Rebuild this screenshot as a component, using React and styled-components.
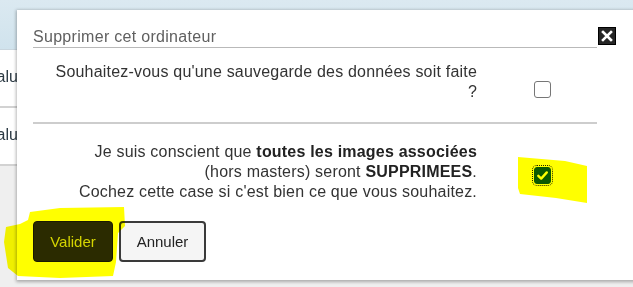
import React from "react";
import styled, { createGlobalStyle } from "styled-components";

const GlobalStyle = createGlobalStyle`
  html, body {
    margin: 0;
    padding: 0;
    overflow: hidden;
  }
  body {
    font-family: "Liberation Sans", Arial, sans-serif;
    background: #efefef;
  }
`;

const Page = styled.div`
  position: relative;
  width: 633px;
  height: 287px;
  background: #efefef;
  overflow: hidden;
`;

const HeaderBar = styled.div`
  height: 50px;
  background: linear-gradient(#dbe9f1, #d0e3ed);
  border-bottom: 1px solid #c9d6de;
  box-sizing: border-box;
`;

const TableRow = styled.div`
  height: 58px;
  display: flex;
  align-items: center;
  background: #fff;
  border-bottom: 2px solid #d2d2d2;
  box-sizing: border-box;
  font-size: 16px;
  color: #2c3a44;
`;

const RowCell = styled.span`
  margin-left: -13px;
  margin-top: -2px;
`;

const Dialog = styled.div`
  position: absolute;
  top: 10px;
  left: 17px;
  width: 640px;
  height: 270px;
  background: #fff;
  box-shadow: 0 1px 3px 1px rgba(0, 0, 0, 0.28);
  padding: 17px 0 0 16px;
  box-sizing: border-box;
`;

const DialogHeader = styled.div`
  display: flex;
  align-items: flex-start;
  width: 583px;
`;

const Title = styled.div`
  width: 564px;
  height: 21px;
  line-height: 20px;
  font-size: 16px;
  letter-spacing: 0.3px;
  color: #606060;
  border-bottom: 1px solid #b9b9b9;
  box-sizing: border-box;
`;

const CloseButton = styled.button`
  width: 18px;
  height: 18px;
  margin-left: 1px;
  padding: 0;
  border: 1px solid #000;
  background: #262626;
  display: flex;
  align-items: center;
  justify-content: center;
  cursor: pointer;
`;

const OptionRow = styled.div`
  display: grid;
  grid-template-columns: 444px 120px;
  width: 564px;
  padding: ${(p) => p.$pad};
  border-bottom: ${(p) => (p.$divider ? "2px solid #cdcdcd" : "none")};
  box-sizing: border-box;
`;

const Label = styled.div`
  text-align: right;
  font-size: 16px;
  line-height: 20px;
  color: #333;
  letter-spacing: 0.2px;

  b {
    color: #222;
    font-weight: bold;
  }
`;

const CheckCell = styled.div`
  padding-left: 57px;
  padding-top: ${(p) => p.$offset}px;
`;

const Box = styled.div`
  width: 17px;
  height: 17px;
  border-radius: 3px;
  box-sizing: border-box;
  border: 1px solid ${(p) => (p.$checked ? "#0b5ad6" : "#767676")};
  background: ${(p) => (p.$checked ? "#0b5ad6" : "#fff")};
  display: flex;
  align-items: center;
  justify-content: center;
  outline: ${(p) => (p.$checked ? "1px dotted #222" : "none")};
  outline-offset: 1px;
`;

const Actions = styled.div`
  display: flex;
  gap: 6px;
`;

const Button = styled.button`
  height: 41px;
  padding: 0;
  font-family: "Liberation Sans", Arial, sans-serif;
  font-size: 15px;
  border-radius: 4px;
  cursor: pointer;
  width: ${(p) => (p.$primary ? "80px" : "87px")};
  background: ${(p) => (p.$primary ? "#2b2b2b" : "#f5f5f5")};
  color: ${(p) => (p.$primary ? "#d4d4d4" : "#222")};
  border: ${(p) => (p.$primary ? "1px solid #1a1a1a" : "2px solid #3a3a3a")};
`;

const Highlight = styled.svg`
  position: absolute;
  left: 0;
  top: 0;
  width: 633px;
  height: 287px;
  pointer-events: none;
  mix-blend-mode: multiply;
`;

const Checkbox = ({ checked }) => (
  <Box $checked={checked}>
    {checked && (
      <svg width="13" height="13" viewBox="0 0 13 13">
        <path d="M2.3 6.8 L5.2 9.6 L10.8 3.4" fill="none" stroke="#fff" strokeWidth="2.4" strokeLinecap="round" strokeLinejoin="round" />
      </svg>
    )}
  </Box>
);

export default function App() {
  return (
    <>
      <GlobalStyle />
      <Page>
        <HeaderBar />
        <TableRow>
          <RowCell>Valuer</RowCell>
        </TableRow>
        <TableRow>
          <RowCell>Valuer</RowCell>
        </TableRow>

        <Dialog>
          <DialogHeader>
            <Title>Supprimer cet ordinateur</Title>
            <CloseButton aria-label="Fermer">
              <svg width="12" height="12" viewBox="0 0 12 12">
                <path d="M2 2 L10 10 M10 2 L2 10" stroke="#fff" strokeWidth="2.6" strokeLinecap="square" />
              </svg>
            </CloseButton>
          </DialogHeader>

          <OptionRow $pad="14px 0 20px" $divider>
            <Label>
              Souhaitez-vous qu'une sauvegarde des données soit faite
              <br />?
            </Label>
            <CheckCell $offset={19}>
              <Checkbox />
            </CheckCell>
          </OptionRow>

          <OptionRow $pad="18px 0 19px">
            <Label>
              Je suis conscient que <b>toutes les images associées</b>
              <br />
              (hors masters) seront <b>SUPPRIMEES</b>.
              <br />
              Cochez cette case si c'est bien ce que vous souhaitez.
            </Label>
            <CheckCell $offset={25}>
              <Checkbox checked />
            </CheckCell>
          </OptionRow>

          <Actions>
            <Button $primary>Valider</Button>
            <Button>Annuler</Button>
          </Actions>
        </Dialog>

        <Highlight viewBox="0 0 633 287">
          <path
            d="M30 212 L60 208 L124 207 L125 226 L118 233 L116 262 L113 276 L60 278 L18 276 L8 268 L4 242 L6 227 L20 224 L28 220 Z"
            fill="#ffff00"
          />
          <path
            d="M518 157 L565 161 L587 166 L587 203 L556 198 L520 194 L518 188 Z"
            fill="#ffff00"
          />
        </Highlight>
      </Page>
    </>
  );
}
